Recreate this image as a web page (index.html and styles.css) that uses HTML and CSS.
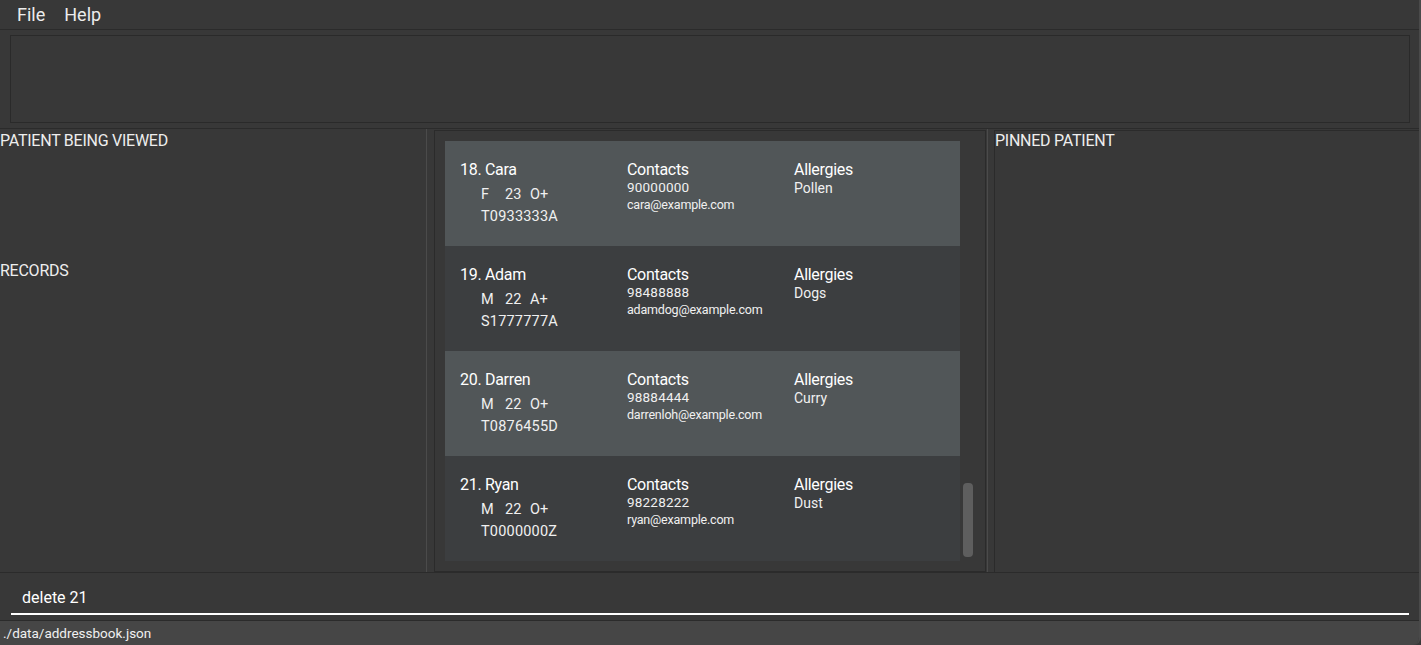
FILE: index.html
```html
<!DOCTYPE html>
<html>
<head>
<meta charset="utf-8">
<link rel="stylesheet" href="styles.css">
</head>
<body>
<div class="app">
  <div class="menubar">
    <span class="menu-item">File</span>
    <span class="menu-item">Help</span>
  </div>
  <div class="result-wrap">
    <div class="result-box"></div>
  </div>
  <div class="main">
    <div class="left-col">
      <div class="section-label">PATIENT BEING VIEWED</div>
      <div class="viewed-area"></div>
      <div class="section-label">RECORDS</div>
    </div>
    <div class="sep"></div>
    <div class="list-panel">
      <div class="cards">
        <div class="card light">
          <div class="col">
            <div class="name">18. Cara</div>
            <div class="sub"><span class="sex">F</span><span class="age">23</span><span>O+</span></div>
            <div class="sub nric">T0933333A</div>
          </div>
          <div class="col">
            <div class="head">Contacts</div>
            <div class="phone">90000000</div>
            <div class="email">cara@example.com</div>
          </div>
          <div class="col">
            <div class="head">Allergies</div>
            <div class="allergy">Pollen</div>
          </div>
        </div>
        <div class="card dark">
          <div class="col">
            <div class="name">19. Adam</div>
            <div class="sub"><span class="sex">M</span><span class="age">22</span><span>A+</span></div>
            <div class="sub nric">S1777777A</div>
          </div>
          <div class="col">
            <div class="head">Contacts</div>
            <div class="phone">98488888</div>
            <div class="email">adamdog@example.com</div>
          </div>
          <div class="col">
            <div class="head">Allergies</div>
            <div class="allergy">Dogs</div>
          </div>
        </div>
        <div class="card light">
          <div class="col">
            <div class="name">20. Darren</div>
            <div class="sub"><span class="sex">M</span><span class="age">22</span><span>O+</span></div>
            <div class="sub nric">T0876455D</div>
          </div>
          <div class="col">
            <div class="head">Contacts</div>
            <div class="phone">98884444</div>
            <div class="email">darrenloh@example.com</div>
          </div>
          <div class="col">
            <div class="head">Allergies</div>
            <div class="allergy">Curry</div>
          </div>
        </div>
        <div class="card dark">
          <div class="col">
            <div class="name">21. Ryan</div>
            <div class="sub"><span class="sex">M</span><span class="age">22</span><span>O+</span></div>
            <div class="sub nric">T0000000Z</div>
          </div>
          <div class="col">
            <div class="head">Contacts</div>
            <div class="phone">98228222</div>
            <div class="email">ryan@example.com</div>
          </div>
          <div class="col">
            <div class="head">Allergies</div>
            <div class="allergy">Dust</div>
          </div>
        </div>
      </div>
      <div class="scroll-track"><div class="scroll-thumb"></div></div>
    </div>
    <div class="sep2"></div>
    <div class="pinned-panel">
      <div class="section-label pinned-label">PINNED PATIENT</div>
    </div>
  </div>
  <div class="command">
    <div class="command-text">delete 21</div>
  </div>
  <div class="status">./data/addressbook.json</div>
</div>
</body>
</html>
```
FILE: styles.css
```css
* { box-sizing: border-box; }
html, body { margin: 0; padding: 0; }
body {
  background: #383838;
  font-family: Roboto, "Liberation Sans", sans-serif;
  color: #ffffff;
  width: 1421px;
  height: 645px;
  overflow: hidden;
}
.app {
  width: 1421px;
  height: 645px;
  display: flex;
  flex-direction: column;
  border-right: 2px solid #4a4a4a;
  border-bottom-right-radius: 8px;
  overflow: hidden;
}
.menubar {
  height: 30px;
  display: flex;
  align-items: center;
  padding-left: 17px;
  gap: 19px;
  border-bottom: 1px solid #2b2b2b;
  flex: none;
}
.menu-item {
  font-size: 18px;
  color: #ececec;
  line-height: 28px;
}
.result-wrap {
  padding: 5px 9px 5px 10px;
  border-bottom: 1px solid #2b2b2b;
  flex: none;
}
.result-box {
  height: 88px;
  border: 1px solid #2a2a2a;
}
.main {
  display: flex;
  height: 444px;
  flex: none;
  border-bottom: 1px solid #2b2b2b;
}
.left-col {
  width: 426px;
  flex: none;
  padding-top: 2px;
}
.section-label {
  font-size: 16px;
  line-height: 20px;
  color: #eeeeee;
  letter-spacing: -0.25px;
}
.viewed-area { height: 110px; }
.sep {
  width: 1px;
  background: #4b4b4b;
  flex: none;
}
.list-panel {
  margin-left: 7px;
  margin-top: 1px;
  width: 552px;
  flex: none;
  border: 1px solid #2b2b2b;
  padding: 10px 12px 10px 10px;
  display: flex;
}
.cards {
  width: 515px;
  display: flex;
  flex-direction: column;
  overflow: hidden;
}
.card {
  height: 105px;
  flex: none;
  padding: 19px 0 0 15px;
  display: grid;
  grid-template-columns: 167px 167px 1fr;
}
.card.light { background: #515658; }
.card.dark { background: #3c3e40; }
.name, .head {
  font-size: 16px;
  line-height: 20px;
  color: #ffffff;
  letter-spacing: -0.3px;
}
.sub {
  font-size: 14.5px;
  line-height: 20px;
  padding-left: 21px;
  color: #f0f0f0;
  margin-top: 5px;
}
.sub.nric { margin-top: 2px; letter-spacing: 0.2px; }
.sex { display: inline-block; width: 24px; }
.age { display: inline-block; width: 25px; }
.phone {
  font-size: 13.5px;
  line-height: 17px;
  color: #f0f0f0;
  letter-spacing: 0.2px;
  margin-top: -1px;
}
.email {
  font-size: 12.5px;
  line-height: 17px;
  color: #f0f0f0;
  letter-spacing: -0.2px;
}
.allergy {
  font-size: 14px;
  line-height: 18px;
  color: #f0f0f0;
  margin-top: -1px;
}
.scroll-track {
  width: 10px;
  margin-left: 3px;
  display: flex;
  flex-direction: column;
  justify-content: flex-end;
  padding-bottom: 4px;
}
.scroll-thumb {
  height: 74px;
  background: #5e5e5e;
  border-radius: 4px;
}
.sep2 {
  width: 1px;
  background: #4b4b4b;
  margin-left: 1px;
  flex: none;
}
.pinned-panel {
  margin-left: 6px;
  margin-top: 1px;
  width: 426px;
  flex: none;
  border: 1px solid #2b2b2b;
  border-bottom: none;
}
.pinned-label { padding-left: 0; }
.command {
  height: 48px;
  flex: none;
  padding: 0 10px 0 11px;
  border-bottom: 1px solid #2b2b2b;
}
.command-text {
  font-size: 16px;
  line-height: 39px;
  padding-top: 5px;
  padding-left: 11px;
  color: #ffffff;
  border-bottom: 2px solid #ffffff;
  height: 42px;
}
.status {
  flex: 1;
  background: #464646;
  font-size: 13.5px;
  line-height: 25px;
  padding-left: 3px;
  color: #f0f0f0;
}
```
